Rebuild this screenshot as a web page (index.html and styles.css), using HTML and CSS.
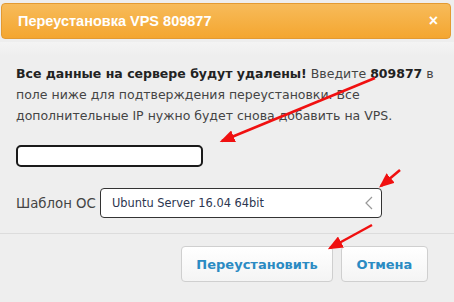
FILE: index.html
```html
<!DOCTYPE html>
<html lang="en">
<head>
    <meta charset="UTF-8">
    <title>Переустановка VPS</title>
    <link rel="stylesheet" href="styles.css">
</head>
<body>
    <div class="modal">
        <div class="modal-header">
            <span class="modal-title">Переустановка VPS 809877</span>
            <span class="close">&times;</span>
        </div>
        <div class="modal-body">
            <p class="warning"><b>Все данные на сервере будут удалены!</b> Введите <b>809877</b> в поле ниже для подтверждения переустановки. Все дополнительные IP нужно будет снова добавить на VPS.</p>
            <input type="text" class="confirm-input">
            <div class="os-row">
                <label class="os-label">Шаблон ОС</label>
                <div class="os-select">
                    <span>Ubuntu Server 16.04 64bit</span>
                    <svg class="chevron" width="8" height="14" viewBox="0 0 8 14"><polyline points="7,1 1,7 7,13" fill="none" stroke="#999" stroke-width="1.2"/></svg>
                </div>
            </div>
        </div>
        <div class="modal-footer">
            <button class="btn btn-ok">Переустановить</button>
            <button class="btn btn-cancel">Отмена</button>
        </div>
    </div>

    <!-- red annotation arrows drawn over the screenshot -->
    <svg class="arrows" width="454" height="302" viewBox="0 0 454 302">
        <defs>
            <marker id="head" markerWidth="6" markerHeight="5" refX="5" refY="2.5" orient="auto" markerUnits="strokeWidth">
                <polygon points="0,0 6,2.5 0,5" fill="#f01010"/>
            </marker>
        </defs>
        <line x1="375" y1="78" x2="222" y2="141" stroke="#f01010" stroke-width="2.5" marker-end="url(#head)"/>
        <line x1="400" y1="170" x2="381" y2="186" stroke="#f01010" stroke-width="2.5" marker-end="url(#head)"/>
        <line x1="372" y1="225" x2="330" y2="248" stroke="#f01010" stroke-width="2.5" marker-end="url(#head)"/>
    </svg>
</body>
</html>
```

FILE: styles.css
```css
body {
    margin: 0;
    background-color: #eeeeee;
    font-family: "DejaVu Sans", Verdana, sans-serif;
    font-size: 12.5px;
    color: #444;
}
.modal {
    width: 454px;
    height: 302px;
    background: linear-gradient(#f4f4f4, #eeeeee 14px);
    background-repeat: no-repeat;
    background-position: 0 39px;
}
.modal-header {
    margin: 3px 3px 0 1px;
    height: 34px;
    padding: 0 12px 0 16px;
    display: flex;
    align-items: center;
    justify-content: space-between;
    background: linear-gradient(#f7bb5a, #f4a630);
    border: 1px solid #e39a32;
    border-radius: 4px;
    color: white;
}
.modal-title {
    font-family: "Liberation Sans", Arial, sans-serif;
    font-weight: bold;
    font-size: 14.5px;
}
.close {
    font-family: "Liberation Sans", Arial, sans-serif;
    font-weight: bold;
    font-size: 16px;
    line-height: 1;
}
.modal-body {
    padding: 24px 16px 0 16px;
}
.warning {
    margin: 0;
    line-height: 21px;
}
.warning b {
    color: #222;
}
.confirm-input {
    display: block;
    box-sizing: border-box;
    margin-top: 19px;
    width: 187px;
    height: 22px;
    border: 2px solid #1a1a1a;
    border-radius: 5px;
    background: white;
    padding: 0 6px;
}
.os-row {
    display: flex;
    align-items: center;
    margin-top: 21px;
}
.os-label {
    width: 84px;
    font-size: 13.3px;
}
.os-select {
    box-sizing: border-box;
    width: 282px;
    height: 30px;
    border: 1px solid #333;
    border-radius: 4px;
    background: white;
    display: flex;
    align-items: center;
    justify-content: space-between;
    padding: 0 8px 0 11px;
    color: #2c3550;
    font-size: 11.4px;
}
.modal-footer {
    margin-top: 15px;
    border-top: 1px solid #dcdcdc;
    padding: 12px 26px 0 0;
    display: flex;
    justify-content: flex-end;
    gap: 8px;
}
.btn {
    height: 36px;
    background: linear-gradient(#ffffff, #f4f4f4);
    border: 1px solid #cfcfcf;
    border-radius: 4px;
    color: #2b8bc3;
    font-family: "DejaVu Sans", Verdana, sans-serif;
    font-weight: bold;
    font-size: 13px;
}
.btn-ok {
    width: 152px;
}
.btn-cancel {
    width: 87px;
}
.arrows {
    position: absolute;
    left: 0;
    top: 0;
}
```
